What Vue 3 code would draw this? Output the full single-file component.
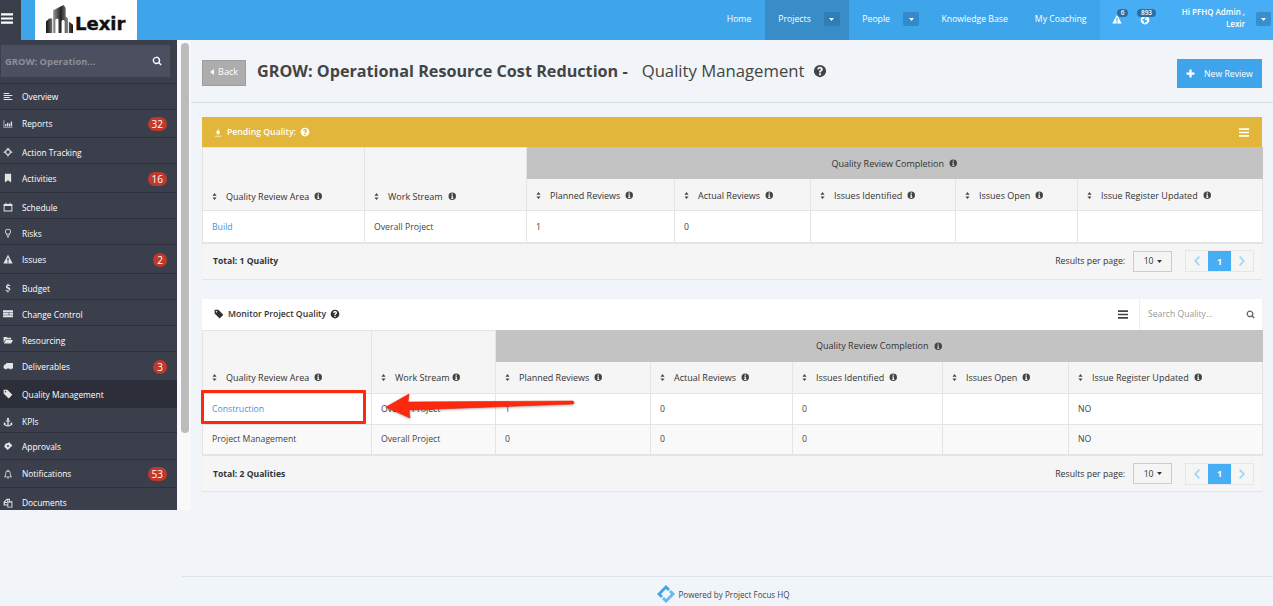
<script setup>
const nav = [
  { label: 'Overview', icon: 'list', h: 27 },
  { label: 'Reports', icon: 'chart', h: 28, badge: 32 },
  { label: 'Action Tracking', icon: 'target', h: 26 },
  { label: 'Activities', icon: 'bookmark', h: 29, badge: 16 },
  { label: 'Schedule', icon: 'calendar', h: 26 },
  { label: 'Risks', icon: 'bulb', h: 26 },
  { label: 'Issues', icon: 'warn', h: 29, badge: 2 },
  { label: 'Budget', icon: 'dollar', h: 26 },
  { label: 'Change Control', icon: 'card', h: 26 },
  { label: 'Resourcing', icon: 'folder', h: 26 },
  { label: 'Deliverables', icon: 'truck', h: 29, badge: 3 },
  { label: 'Quality Management', icon: 'tag', h: 27, active: true },
  { label: 'KPIs', icon: 'anchor', h: 25 },
  { label: 'Approvals', icon: 'ticket', h: 27 },
  { label: 'Notifications', icon: 'bell', h: 28, badge: 53 },
  { label: 'Documents', icon: 'files', h: 30 }
]
const sub = ['Planned Reviews', 'Actual Reviews', 'Issues Identified', 'Issues Open', 'Issue Register Updated']
const panels = {
  pending: {
    cols: [162, 162, 148, 136, 145, 122, 185],
    rows: [[{ text: 'Build', isLink: true }, 'Overall Project', '1', '0', '', '', '']]
  },
  monitor: {
    cols: [169, 124, 155, 142, 150, 126, 194],
    rows: [
      [{ text: 'Construction', isLink: true }, 'Overall Project', '1', '0', '0', '', 'NO'],
      ['Project Management', 'Overall Project', '0', '0', '0', '', 'NO']
    ]
  }
}
const cellText = c => (typeof c === 'object' ? c.text : c)
const isLink = c => typeof c === 'object' && c.isLink
</script>

<template>
  <div class="page">
    <svg class="defs" width="0" height="0" aria-hidden="true">
      <defs>
        <linearGradient id="logoGrad" x1="0" y1="0" x2="1" y2="0">
          <stop offset="0" stop-color="#111" />
          <stop offset="0.3" stop-color="#8a8a8a" />
          <stop offset="0.55" stop-color="#222" />
          <stop offset="0.75" stop-color="#777" />
          <stop offset="1" stop-color="#111" />
        </linearGradient>
      </defs>
      <symbol id="info" viewBox="0 0 16 16"><path fill-rule="evenodd" d="M8 1a7 7 0 1 0 0 14A7 7 0 0 0 8 1zM6.800 3h2.400v2.400H6.800zM6 6.600h3.200v5h1.200v1.400H5.800v-1.400h1v-3.600H6z"/></symbol>
      <symbol id="help" viewBox="0 0 16 16"><path fill-rule="evenodd" d="M8 1a7 7 0 1 0 0 14A7 7 0 0 0 8 1zM6.900 10.600h2.200v2.200H6.900zM8 3.200c1.900 0 3.200 1.100 3.200 2.700 0 1.200-.6 1.800-1.400 2.400-.6.400-.8.700-.8 1.300H6.900c0-1.300.4-1.900 1.200-2.500.6-.4.900-.7.900-1.100 0-.5-.4-.8-1-.8s-1.100.4-1.200 1.100L4.800 5.900C5 4.300 6.300 3.200 8 3.200z"/></symbol>
      <symbol id="sort" viewBox="0 0 8 12"><path d="M4 0l3.500 4.500H.5zM4 12L.5 7.500h7z"/></symbol>
      <symbol id="search" viewBox="0 0 16 16"><path fill-rule="evenodd" d="M7 1a6 6 0 1 0 3.500 10.900l3.300 3.300 1.700-1.700-3.300-3.300A6 6 0 0 0 7 1zm0 2.200a3.800 3.800 0 1 1 0 7.600 3.800 3.800 0 0 1 0-7.600z"/></symbol>
      <symbol id="bars" viewBox="0 0 14 12"><path d="M0 0h14v2.400H0zM0 4.800h14v2.400H0zM0 9.600h14V12H0z"/></symbol>
      <symbol id="caret" viewBox="0 0 8 5"><path d="M0 0h8L4 5z"/></symbol>
      <symbol id="chev-left" viewBox="0 0 6 10"><path d="M4.700 0L6 1.300 2.500 5 6 8.700 4.700 10 0 5z"/></symbol>
      <symbol id="chev-right" viewBox="0 0 6 10"><path d="M1.300 0L0 1.300 3.500 5 0 8.700 1.300 10 6 5z"/></symbol>
      <symbol id="list" viewBox="0 0 16 16"><path d="M1 3h9v1.800H1zM1 6.200h14V8H1zM1 9.400h10v1.800H1zM1 12.600h14v1.800H1z"/></symbol>
      <symbol id="chart" viewBox="0 0 16 16"><path d="M1 2h1v11h13v1H1zM3.500 8h2v4h-2zM6.500 6h2v6h-2zM9.500 7h2v5h-2zM12.500 4h2v8h-2z"/></symbol>
      <symbol id="target" viewBox="0 0 16 16"><path fill-rule="evenodd" d="M7 1h2v2.200A5 5 0 0 1 12.800 7H15v2h-2.200A5 5 0 0 1 9 12.800V15H7v-2.200A5 5 0 0 1 3.200 9H1V7h2.200A5 5 0 0 1 7 3.200zm1 4a3 3 0 1 0 0 6 3 3 0 0 0 0-6z"/></symbol>
      <symbol id="bookmark" viewBox="0 0 16 16"><path d="M3 1h10v14l-5-3.500L3 15z"/></symbol>
      <symbol id="calendar" viewBox="0 0 16 16"><path fill-rule="evenodd" d="M1 3h3V1h1.500v2h5V1H12v2h3v12H1zm1.500 3.500v7h11v-7z"/></symbol>
      <symbol id="bulb" viewBox="0 0 16 16"><path fill-rule="evenodd" d="M8 1a4.800 4.800 0 0 0-2.500 8.900V12h5V9.900A4.800 4.800 0 0 0 8 1zm0 1.500a3.300 3.300 0 0 1 1.200 6.400l-.2.100v1.500H7V9l-.2-.1A3.300 3.300 0 0 1 8 2.500zM6.200 13h3.600v1l-1 1H7.200l-1-1z"/></symbol>
      <symbol id="warn" viewBox="0 0 16 16"><path fill-rule="evenodd" d="M8 1l7.500 14H.5zM7 6v5h2V6zm0 6v2h2v-2z"/></symbol>
      <symbol id="dollar" viewBox="0 0 16 16"><path d="M7.200 1h1.600v1.600c1.300.1 2.300.5 3 1l-.8 1.500c-.8-.5-1.600-.8-2.600-.8-1 0-1.600.4-1.600 1 0 .7.700 1 2 1.400 1.900.6 3 1.300 3 3 0 1.500-1.100 2.500-3 2.800V15H7.200v-1.500c-1.200-.1-2.400-.5-3.200-1.200l.9-1.500c.9.700 2 1 3 1 1.100 0 1.700-.4 1.700-1.100 0-.7-.6-1-2-1.500C5.800 8.100 4.700 7.400 4.700 5.800c0-1.500 1-2.600 2.500-3z"/></symbol>
      <symbol id="card" viewBox="0 0 16 16"><path d="M0 2h16v3H0zM0 6h9v3H0zM10 6h6v3h-6zM0 10h16v3H0z"/></symbol>
      <symbol id="folder" viewBox="0 0 16 16"><path d="M1 3h5l1.500 1.500H13V7H4L1 12zM4.500 8H16l-3 5.500H1.500z"/></symbol>
      <symbol id="truck" viewBox="0 0 16 16"><path d="M5 3h11v9h-2a1.800 1.800 0 0 1-3.500 0H6.500A1.800 1.800 0 0 1 3 12H1V8l2-3h2z"/></symbol>
      <symbol id="tag" viewBox="0 0 16 16"><path fill-rule="evenodd" d="M1 1h6l8 8-6 6-8-8zm3 2a1.200 1.200 0 1 0 0 2.400A1.200 1.200 0 0 0 4 3z"/></symbol>
      <symbol id="anchor" viewBox="0 0 16 16"><path fill-rule="evenodd" d="M8 1a1.800 1.800 0 0 1 1 3.300V5.500h2.500V7H9v6.200c1.800-.2 3-1.100 3.400-2.400L11.500 10l3-1.500.5 5-1.200-1c-1 1.700-3.200 2.500-5.800 2.500s-4.800-.8-5.800-2.500l-1.200 1 .5-5 3 1.500-.9.800c.4 1.300 1.600 2.200 3.400 2.400V7H4.500V5.500H7V4.300A1.800 1.800 0 0 1 8 1z"/></symbol>
      <symbol id="ticket" viewBox="0 0 16 16"><path fill-rule="evenodd" d="M9.500 1.500L15 7l-7.500 7.500L2 9c1-.7 1.200-1.700.5-2.600L5.800 3.200c1 .6 2.800.2 3.700-1.700zM8 6L6 8l2 2 2-2z"/></symbol>
      <symbol id="bell" viewBox="0 0 16 16"><path fill-rule="evenodd" d="M8 1a1 1 0 0 1 1 1v.3C11 2.800 12 4.500 12 6.500c0 3 .7 4.500 2.500 6.500h-13C3.300 11 4 9.500 4 6.500 4 4.500 5 2.800 7 2.300V2a1 1 0 0 1 1-1zM8 3.500c-1.700 0-2.800 1.200-2.800 3 0 2.500-.4 3.800-1.300 5.300h8.200c-.9-1.500-1.300-2.800-1.300-5.300 0-1.800-1.100-3-2.800-3zM6.500 13.800h3a1.500 1.500 0 0 1-3 0z"/></symbol>
      <symbol id="files" viewBox="0 0 16 16"><path fill-rule="evenodd" d="M6 1h5v4h4v10H7v-3H1V6zm.5 2L3 6.500h3.500zm1 .5v4.500H3v2.500h4V6.500L8.500 5h1V3zm1 3.500v7h5v-7z"/></symbol>
      <symbol id="fire" viewBox="0 0 16 16"><path d="M9 0c.6 3-3.500 4.500-3.500 8 0 1.500 1 3 2.500 3s3-1.200 3-3.200c0-1-.4-1.800-.8-2.300C9.800 6.300 9 6.500 8.800 5.500 8.600 4 9.600 2 9 0zM3 13h10v1.300H3z"/></symbol>
      <symbol id="plus" viewBox="0 0 16 16"><path d="M6 1h4v5h5v4h-5v5H6v-5H1V6h5z"/></symbol>
      <symbol id="globe" viewBox="0 0 16 16"><path fill-rule="evenodd" d="M8 1a7 7 0 1 0 0 14A7 7 0 0 0 8 1zm-1 3h3v2H8v2h3v3H8v2H6V9H4V6h3z"/></symbol>
      <symbol id="logo" viewBox="0 0 26 27"><path fill="url(#logoGrad)" d="M0 27V16l3-3h3v14zM7 27V5L17 0l2 3v8l2 2v14h-3V16c0-2-3-2-3 0v11h-3V14l-1-1-2 1v13zM22 27V16l4 3v8z"/></symbol>
    </svg>

    <header class="topbar">
      <button class="burger"><svg class="burger-icon"><use href="#bars" /></svg></button>
      <div class="brand">
        <svg class="brand-mark"><use href="#logo" /></svg>
        <span class="brand-name">Lexir</span>
      </div>
      <nav class="topnav">
        <a class="topnav-item">Home</a>
        <a class="topnav-item is-active">Projects<span class="drop"><svg class="drop-caret"><use href="#caret" /></svg></span></a>
        <a class="topnav-item">People<span class="drop"><svg class="drop-caret"><use href="#caret" /></svg></span></a>
        <a class="topnav-item">Knowledge Base</a>
        <a class="topnav-item">My Coaching</a>
      </nav>
      <div class="userzone">
        <span class="alert">
          <svg class="alert-icon"><use href="#warn" /></svg>
          <span class="pill pill-one">6</span>
        </span>
        <span class="alert alert-second">
          <svg class="alert-icon globe"><use href="#globe" /></svg>
          <span class="pill pill-two">893</span>
        </span>
        <span class="username">Hi PFHQ Admin ,<br />Lexir</span>
        <span class="drop user-drop"><svg class="drop-caret"><use href="#caret" /></svg></span>
      </div>
    </header>

    <div class="layout">
      <aside class="side">
        <div class="sidebar">
          <div class="sidesearch">
            <span class="sidesearch-text">GROW: Operation...</span>
            <svg class="sidesearch-icon"><use href="#search" /></svg>
          </div>
          <a
            v-for="item in nav"
            :key="item.label"
            class="navrow"
            :class="{ 'is-active': item.active, 'is-slim': item.h <= 26 }"
            :style="{ height: item.h + 'px' }"
          >
            <svg class="navicon"><use :href="'#' + item.icon" /></svg>
            <span class="navlabel">{{ item.label }}</span>
            <span v-if="item.badge" class="navbadge">{{ item.badge }}</span>
          </a>
        </div>
        <div class="track"><div class="thumb"></div></div>
      </aside>

      <main class="main">
        <div class="pagehead">
          <button class="back"><svg class="back-caret" viewBox="0 0 5 8"><path d="M5 0v8L0 4z" /></svg>Back</button>
          <h1 class="title"><b>GROW: Operational Resource Cost Reduction -</b><span class="title-sub">Quality Management</span></h1>
          <svg class="title-help"><use href="#help" /></svg>
          <button class="newbtn"><svg class="newbtn-icon"><use href="#plus" /></svg>New Review</button>
        </div>

        <section class="panel panel-pending">
          <div class="panel-head is-yellow">
            <svg class="ph-fire"><use href="#fire" /></svg>
            <span class="ph-title-white">Pending Quality:</span>
            <svg class="ph-help-white"><use href="#help" /></svg>
            <svg class="ph-bars-white"><use href="#bars" /></svg>
          </div>
          <table class="grid grid-pending">
            <colgroup><col v-for="(w, i) in panels.pending.cols" :key="i" :style="{ width: w + 'px' }" /></colgroup>
            <thead>
              <tr class="row-group">
                <th rowspan="2" class="th-base"><span class="th"><svg class="sort"><use href="#sort" /></svg>Quality Review Area<svg class="info"><use href="#info" /></svg></span></th>
                <th rowspan="2" class="th-base"><span class="th"><svg class="sort"><use href="#sort" /></svg>Work Stream<svg class="info"><use href="#info" /></svg></span></th>
                <th colspan="5" class="th-group">Quality Review Completion<svg class="info"><use href="#info" /></svg></th>
              </tr>
              <tr class="row-sub">
                <th v-for="s in sub" :key="s" class="th-base"><span class="th"><svg class="sort"><use href="#sort" /></svg>{{ s }}<svg class="info"><use href="#info" /></svg></span></th>
              </tr>
            </thead>
            <tbody>
              <tr v-for="(r, ri) in panels.pending.rows" :key="ri" class="row-body">
                <td v-for="(c, ci) in r" :key="ci" :class="{ link: isLink(c) }">{{ cellText(c) }}</td>
              </tr>
            </tbody>
          </table>
          <div class="panel-foot">
            <span class="total">Total: 1 Quality</span>
            <span class="perpage">Results per page:</span>
            <span class="select">10<svg class="select-caret"><use href="#caret" /></svg></span>
            <span class="pager">
              <span class="pg"><svg class="chev"><use href="#chev-left" /></svg></span>
              <span class="pg is-on">1</span>
              <span class="pg"><svg class="chev"><use href="#chev-right" /></svg></span>
            </span>
          </div>
        </section>

        <section class="panel panel-monitor">
          <div class="panel-head is-white">
            <svg class="ph-tag"><use href="#tag" /></svg>
            <span class="ph-title-dark">Monitor Project Quality</span>
            <svg class="ph-help-dark"><use href="#help" /></svg>
            <svg class="ph-bars-dark"><use href="#bars" /></svg>
            <div class="searchbox">
              <span class="searchbox-text">Search Quality...</span>
              <svg class="searchbox-icon"><use href="#search" /></svg>
            </div>
          </div>
          <table class="grid grid-monitor">
            <colgroup><col v-for="(w, i) in panels.monitor.cols" :key="i" :style="{ width: w + 'px' }" /></colgroup>
            <thead>
              <tr class="row-group">
                <th rowspan="2" class="th-base"><span class="th"><svg class="sort"><use href="#sort" /></svg>Quality Review Area<svg class="info"><use href="#info" /></svg></span></th>
                <th rowspan="2" class="th-base"><span class="th"><svg class="sort"><use href="#sort" /></svg>Work Stream<svg class="info tight"><use href="#info" /></svg></span></th>
                <th colspan="5" class="th-group">Quality Review Completion<svg class="info"><use href="#info" /></svg></th>
              </tr>
              <tr class="row-sub">
                <th v-for="s in sub" :key="s" class="th-base"><span class="th"><svg class="sort"><use href="#sort" /></svg>{{ s }}<svg class="info"><use href="#info" /></svg></span></th>
              </tr>
            </thead>
            <tbody>
              <tr v-for="(r, ri) in panels.monitor.rows" :key="ri" class="row-body" :class="{ 'is-odd': ri === 1 }">
                <td v-for="(c, ci) in r" :key="ci" :class="{ link: isLink(c) }">{{ cellText(c) }}</td>
              </tr>
            </tbody>
          </table>
          <div class="panel-foot">
            <span class="total">Total: 2 Qualities</span>
            <span class="perpage">Results per page:</span>
            <span class="select">10<svg class="select-caret"><use href="#caret" /></svg></span>
            <span class="pager">
              <span class="pg"><svg class="chev"><use href="#chev-left" /></svg></span>
              <span class="pg is-on">1</span>
              <span class="pg"><svg class="chev"><use href="#chev-right" /></svg></span>
            </span>
          </div>
          <div class="callout-box"></div>
          <svg class="callout-arrow" viewBox="0 0 200 34" width="200" height="34">
            <path d="M1 14 L24 1 L23 9 L188 8 Q190 10 188 11 L24 17 L25 25 Z" fill="#fb2a0e" stroke="#e8230a" stroke-width="0.6" />
          </svg>
        </section>
      </main>
    </div>

    <footer class="foot">
      <svg class="foot-logo" viewBox="0 0 18 18">
        <path d="M9 0l4 4-2 2-2-2-5 5 2 2-2 2-4-4z" fill="#3fa5ea" />
        <path d="M9 18l-4-4 2-2 2 2 5-5-2-2 2-2 4 4z" fill="#6bb8ea" />
      </svg>
      <span>Powered by Project Focus HQ</span>
    </footer>
  </div>
</template>

<style>
html, body { margin: 0; background: #f1f4f8; overflow: hidden; }
</style>

<style scoped>
.page { width: 1273px; height: 606px; display: flex; flex-direction: column; overflow: hidden; background: #f1f4f8; font-family: "Open Sans", sans-serif; color: #333; font-size: 9px; }
.defs { position: absolute; }
svg { fill: currentColor; display: block; flex: none; }
a { text-decoration: none; }
button { font-family: inherit; border: 0; padding: 0; cursor: pointer; }

.topbar { height: 40px; flex: none; display: flex; background: #3fa5ea; color: #fff; }
.burger { width: 21px; background: #3a3f4c; color: #fff; display: flex; align-items: center; justify-content: flex-start; padding-left: 1px; box-sizing: border-box; }
.burger-icon { width: 12px; height: 11px; margin-top: -3px; }
.brand { margin-left: 14px; width: 102px; background: #fff; display: flex; align-items: center; padding-left: 11px; box-sizing: border-box; color: #111; }
.brand-mark { width: 27px; height: 28px; margin-top: -3px; }
.brand-name { font-family: "DejaVu Sans", sans-serif; font-weight: 700; font-size: 18px; letter-spacing: 0; margin-left: 2px; margin-top: 7px; line-height: 20px; -webkit-text-stroke: 0.4px #111; }
.topnav { margin-left: auto; display: flex; }
.topnav-item { display: flex; align-items: center; padding: 0 13.5px 2px; font-size: 8.7px; font-weight: 400; color: #fff; }
.topnav-item.is-active { background: #388dc8; padding-right: 9px; }
.topnav-item:nth-child(3) { padding-right: 9px; }
.drop { width: 16px; height: 14px; margin-left: 13px; background: rgba(40, 105, 160, .45); border-radius: 2px; display: flex; align-items: center; justify-content: center; }
.drop-caret { width: 5px; height: 3px; color: #fff; }
.userzone { width: 173px; background: #47aef5; display: flex; align-items: center; position: relative; }
.alert { position: absolute; left: 12px; top: 14px; }
.alert-second { left: 40px; }
.alert-icon { width: 10px; height: 10px; }
.globe { margin-top: 1px; }
.pill { position: absolute; background: #2b6d9f; color: #fff; border-radius: 5px; font-size: 6.5px; line-height: 8px; height: 8px; text-align: center; font-weight: 600; }
.pill-one { left: 5px; top: -5px; width: 11px; }
.pill-two { left: -3px; top: -5px; width: 19px; }
.username { position: absolute; right: 28px; top: 6px; text-align: right; font-size: 8px; font-weight: 600; line-height: 12px; color: #fff; }
.user-drop { position: absolute; right: 2px; top: 12px; margin: 0; width: 15px; }

.layout { height: 536px; flex: none; display: flex; align-items: flex-start; }
.side { display: flex; width: 191px; height: 470px; flex: none; }
.sidebar { width: 177px; height: 470px; overflow: hidden; background: #3b3f4c; }
.sidesearch { height: 43px; box-sizing: border-box; display: flex; align-items: center; padding: 0 4px; background: #4b4f60; background-clip: padding-box; border-style: solid; border-color: #3b3f4c; border-width: 5px 7px 6px 1px; box-shadow: 0 1px 0 #2e313c; }
.sidesearch-text { font-size: 9.4px; font-weight: 700; color: #8c8f99; }
.sidesearch-icon { margin-left: auto; width: 10px; height: 10px; color: #fff; margin-right: 4px; }
.navrow { display: flex; align-items: center; box-sizing: border-box; border-bottom: 1px solid #2e313c; color: #fff; font-size: 8.4px; padding-left: 3px; padding-right: 10px; }
.navrow.is-slim { padding-top: 3px; }
.navrow.is-active { background: #2c2f3a; border-bottom-color: #2c2f3a; }
.navicon { width: 10px; height: 10px; margin-right: 9px; color: #e4e4e4; }
.navlabel { flex: 1; white-space: nowrap; }
.navbadge { background: #c0392b; color: #fff; border-radius: 7px; height: 14px; min-width: 14px; padding: 0 4px; box-sizing: border-box; line-height: 14px; text-align: center; font-size: 10px; margin-top: 1px; }
.track { width: 14px; height: 470px; background: #f9f9f9; padding: 3px 2px 0 4px; box-sizing: border-box; }
.thumb { height: 390px; background: #bcbcbc; border-radius: 4px; }

.main { width: 1082px; padding: 0 11px; box-sizing: border-box; position: relative; }
.pagehead { height: 63px; margin: 0 -11px 14px; padding: 0 11px; box-sizing: border-box; border-bottom: 1px solid #d5dde5; display: flex; align-items: center; }
.back { width: 44px; height: 26px; background: #adadad; border: 1px solid #9d9d9d; color: #fff; display: flex; align-items: center; justify-content: center; gap: 4px; font-size: 9px; font-weight: 400; box-sizing: border-box; margin-top: 3px; padding-bottom: 2px; }
.back-caret { width: 4px; height: 6px; }
.title { margin: 0 0 0 11px; font-size: 16.2px; font-weight: 400; color: #444; line-height: 24px; white-space: nowrap; }
.title b { font-weight: 700; color: #444; }
.title-sub { margin-left: 14px; font-size: 16.700px; }
.title-help { width: 14px; height: 14px; margin-left: 9px; color: #444; }
.newbtn { margin-left: auto; width: 85px; height: 29px; background: #3fa5ea; color: #fff; font-size: 8.7px; font-weight: 400; display: flex; align-items: center; justify-content: flex-start; padding-left: 9px; box-sizing: border-box; gap: 9px; margin-top: 5px; }
.newbtn-icon { width: 9px; height: 9px; }

.panel { background: #f5f5f5; box-shadow: 0 1px 1px rgba(0, 0, 0, .06); position: relative; }
.panel-pending { margin-bottom: 20px; }
.panel-head { display: flex; align-items: center; position: relative; }
.is-yellow { height: 30px; background: #e2b53b; color: #fff; padding-left: 11px; }
.is-white { height: 31px; background: #fff; color: #222; padding-left: 12px; }
.ph-fire { width: 10px; height: 11px; }
.ph-title-white { margin-left: 4px; font-weight: 600; font-size: 8.7px; }
.ph-help-white { width: 10px; height: 10px; margin-left: 4px; }
.ph-bars-white { width: 10px; height: 9px; margin-left: auto; margin-right: 13px; }
.ph-tag { width: 10px; height: 10px; color: #333; }
.ph-title-dark { margin-left: 4px; font-size: 8.7px; font-weight: 600; color: #333; }
.ph-help-dark { width: 10px; height: 10px; margin-left: 4px; color: #333; }
.ph-bars-dark { width: 10px; height: 9px; margin-left: auto; margin-right: 11px; color: #444; }
.searchbox { width: 123px; height: 31px; border-left: 1px solid #eee; display: flex; align-items: center; padding: 0 7px 0 8px; box-sizing: border-box; color: #999; }
.searchbox-text { font-size: 8.6px; }
.searchbox-icon { width: 9px; height: 9px; margin-left: auto; color: #666; }

.grid { width: 1060px; table-layout: fixed; border-collapse: collapse; background: #fff; border: 1px solid #e4e4e4; border-bottom-width: 2px; box-sizing: border-box; }
.grid th, .grid td { border: 1px solid #e4e4e4; padding: 0 9px; text-align: left; font-size: 8.7px; white-space: nowrap; box-sizing: border-box; }
.grid th { font-size: 9px; }
.grid-pending td { padding-top: 2px; }
.row-group { height: 31px; }
.row-sub { height: 32px; }
.row-body { height: 32px; }
.grid-monitor .row-body { height: 31px; }
.th-base { background: #f5f5f5; font-weight: 400; color: #333; vertical-align: bottom; padding-bottom: 7px !important; }
.grid-monitor .th-base { padding-bottom: 9px !important; }
.row-sub .th-base { vertical-align: middle; padding-top: 2px !important; padding-bottom: 0 !important; }
.grid-monitor .row-sub .th-base { padding-top: 0 !important; padding-bottom: 0 !important; }
.th-group { background: #c3c3c3; border-color: #c3c3c3 !important; text-align: center !important; font-weight: 400; color: #333; }
.th { display: flex; align-items: center; }
.th-group .info { display: inline-block; vertical-align: -1px; }
.sort { width: 5px; height: 7px; margin-right: 9px; color: #444; }
.info { width: 8.500px; height: 8.500px; margin-left: 5px; color: #444; }
.info.tight { margin-left: 2px; }
.row-body td { color: #444; }
.is-odd td { background: #f9f9f9; }
.grid td.link { color: #4492e4; }

.panel-foot { height: 35px; display: flex; align-items: center; padding: 0 8px 0 11px; box-sizing: border-box; background: #f5f5f5; }
.total { font-weight: 700; font-size: 8.6px; color: #333; margin-right: auto; }
.perpage { font-size: 8.75px; color: #333; margin-right: 8px; }
.select { width: 39px; height: 21px; border: 1px solid #ccc; background: #f5f5f5; box-sizing: border-box; display: flex; align-items: center; justify-content: center; gap: 3px; font-size: 8.7px; margin-right: 13px; }
.select-caret { width: 5px; height: 3px; color: #333; }
.pager { display: flex; height: 22px; border: 1px solid #e6e6e6; box-sizing: border-box; }
.pg { width: 22.300px; display: flex; align-items: center; justify-content: center; color: #a5d6f6; }
.pg.is-on { background: #47aef5; color: #fff; font-size: 9px; font-weight: 700; }
.chev { width: 6px; height: 10px; }

.callout-box { position: absolute; left: -1px; top: 91px; width: 165px; height: 34px; border: 3px solid #fb2a0e; box-sizing: border-box; border-radius: 1px; pointer-events: none; }
.callout-arrow { position: absolute; left: 183px; top: 94px; filter: drop-shadow(0 1px 1px rgba(0, 0, 0, .3)); pointer-events: none; }

.foot { margin-left: 182px; flex: 1; border-top: 1px solid #d9e3ee; display: flex; align-items: center; justify-content: center; gap: 3px; font-size: 8.1px; color: #444; padding-right: 8px; padding-top: 5px; box-sizing: border-box; }
.foot-logo { width: 18px; height: 18px; }
</style>
